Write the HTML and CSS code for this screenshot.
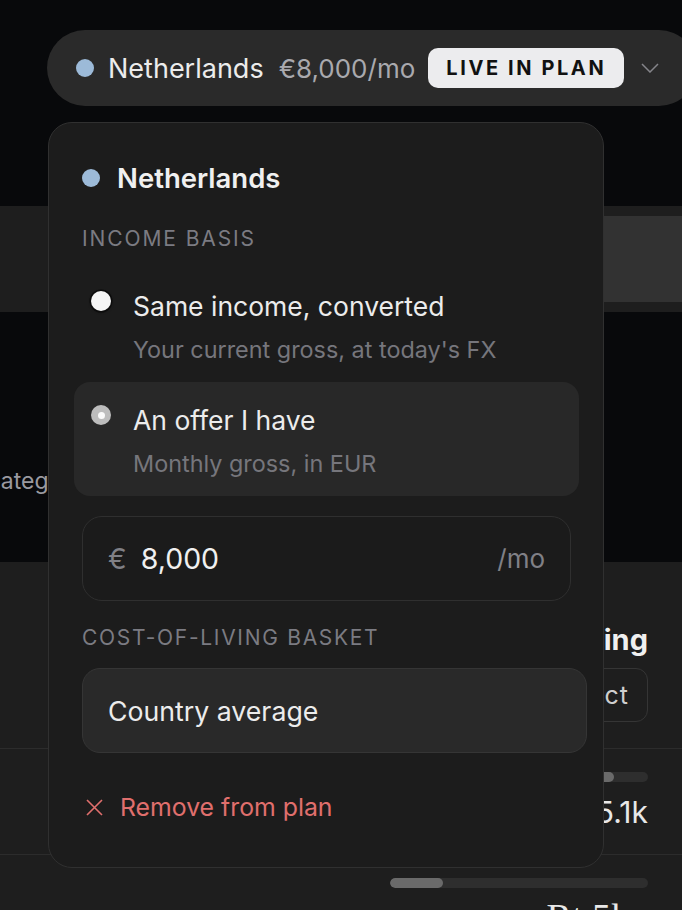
FILE: index.html
```html
<!DOCTYPE html>
<html lang="en">
<head>
<meta charset="utf-8">
<title>Plan</title>
<link rel="stylesheet" href="styles.css">
</head>
<body>
<div class="page">
  <div class="bg-top"></div>
  <div class="band"><div class="band-block"></div></div>
  <div class="dark"><span class="cat-label">Categories</span></div>
  <div class="lower">
    <div class="lower-head">
      <h2 class="lower-title">Spending</h2>
      <button class="ghost-btn" type="button">Select</button>
    </div>
    <div class="row">
      <div class="bar"><div class="bar-fill" style="width:87%"></div></div>
      <div class="row-value">€5.1k</div>
    </div>
    <div class="row">
      <div class="bar"><div class="bar-fill" style="width:20.5%"></div></div>
      <div class="row-serif">Rt 5k</div>
    </div>
  </div>
</div>

<div class="pill">
  <span class="dot"></span>
  <span class="pill-name">Netherlands</span>
  <span class="pill-price">€8,000/mo</span>
  <span class="badge">LIVE IN PLAN</span>
  <svg class="chev" viewBox="0 0 18 10" aria-hidden="true"><path d="M1 1 L9 9 L17 1" /></svg>
</div>

<div class="panel">
  <div class="panel-head">
    <span class="dot"></span>
    <span class="panel-title">Netherlands</span>
  </div>
  <div class="section-label">INCOME BASIS</div>
  <div class="options">
    <div class="option">
      <span class="radio"></span>
      <div class="option-text">
        <div class="option-title">Same income, converted</div>
        <div class="option-sub">Your current gross, at today's FX</div>
      </div>
    </div>
    <div class="option option-selected">
      <span class="radio radio-on"></span>
      <div class="option-text">
        <div class="option-title">An offer I have</div>
        <div class="option-sub">Monthly gross, in EUR</div>
      </div>
    </div>
  </div>
  <div class="amount-field">
    <span class="cur">€</span>
    <span class="amount">8,000</span>
    <span class="unit">/mo</span>
  </div>
  <div class="section-label section-label-2">COST-OF-LIVING BASKET</div>
  <div class="select-box">Country average</div>
  <div class="remove">
    <svg class="x-icon" viewBox="0 0 17 17" aria-hidden="true"><path d="M1 1 L16 16 M16 1 L1 16" /></svg>
    <span>Remove from plan</span>
  </div>
</div>
</body>
</html>
```

FILE: styles.css
```css
* { box-sizing: border-box; }

body {
  margin: 0;
  width: 682px;
  height: 910px;
  overflow: hidden;
  position: relative;
  background: #08090b;
  font-family: Inter, "Noto Sans", sans-serif;
  color: #ececec;
}

/* background page */
.page { display: flex; flex-direction: column; }
.bg-top { height: 206px; }
.band {
  height: 106px;
  background: #1e1e1e;
  display: flex;
  justify-content: flex-end;
  align-items: center;
}
.band-block { width: 352px; height: 86px; background: #323232; }
.dark { height: 250px; padding-top: 155px; }
.cat-label {
  display: block;
  margin-left: -16px;
  font-size: 23px;
  line-height: 28px;
  color: #9a9aa0;
}
.lower {
  background: #1e1e1e;
  height: 348px;
  display: flex;
  flex-direction: column;
}
.lower-head {
  display: flex;
  flex-direction: column;
  align-items: flex-end;
  padding: 62px 34px 26px 0;
}
.lower-title {
  margin: 0;
  font-size: 29px;
  font-weight: 700;
  line-height: 32px;
  color: #f0f0f0;
}
.ghost-btn {
  margin-top: 12px;
  height: 54px;
  padding: 0 18px;
  border: 1px solid #353535;
  border-radius: 12px;
  background: transparent;
  color: #cfcfcf;
  font-family: Inter, sans-serif;
  font-size: 25px;
  letter-spacing: 1px;
}
.row {
  border-top: 1px solid #2c2c2c;
  padding: 23px 34px 26px 0;
  display: flex;
  flex-direction: column;
  align-items: flex-end;
}
.bar {
  width: 258px;
  height: 10px;
  border-radius: 5px;
  background: #2e2e2e;
  overflow: hidden;
}
.bar-fill { height: 100%; background: #6a6a6a; border-radius: 5px; }
.row-value {
  margin-top: 14px;
  font-size: 30px;
  line-height: 32px;
  color: #e8e8e8;
}
.row-serif {
  margin-top: 10px;
  margin-right: 18px;
  font-family: "Liberation Serif", serif;
  font-size: 38px;
  line-height: 38px;
  color: #e8e8e8;
}

/* pill */
.pill {
  position: absolute;
  left: 47px;
  top: 30px;
  width: 650px;
  height: 76px;
  border-radius: 38px;
  background: #2a2a2a;
  display: flex;
  align-items: center;
  padding-left: 29px;
}
.dot {
  width: 18px;
  height: 18px;
  border-radius: 50%;
  background: #9cbad8;
  flex-shrink: 0;
}
.pill-name { margin-left: 14px; font-size: 27px; color: #ececec; }
.pill-price { margin-left: 15px; font-size: 26px; color: #a9a9ae; }
.badge {
  margin-left: 13px;
  height: 40px;
  padding: 0 18px;
  display: flex;
  align-items: center;
  border-radius: 10px;
  background: #ececee;
  color: #111;
  font-size: 20px;
  font-weight: 700;
  letter-spacing: 2.6px;
}
.chev {
  margin-left: 17px;
  width: 18px;
  height: 10px;
  fill: none;
  stroke: #85858a;
  stroke-width: 1.5;
}

/* panel */
.panel {
  position: absolute;
  left: 48px;
  top: 122px;
  width: 556px;
  height: 746px;
  background: #1c1c1c;
  border: 1px solid #303030;
  border-radius: 24px;
  padding: 39px 0 0 33px;
  overflow: hidden;
}
.panel-head { display: flex; align-items: center; height: 32px; }
.panel-title {
  margin-left: 17px;
  font-size: 27.5px;
  font-weight: 600;
  color: #f0f0f0;
}
.section-label {
  margin-top: 33px;
  font-size: 21px;
  line-height: 24px;
  letter-spacing: 1.9px;
  color: #7b7b82;
}
.section-label-2 { margin-top: 25px; letter-spacing: 1.7px; }
.options { margin-top: 17px; margin-left: -8px; width: 505px; }
.option {
  display: flex;
  align-items: flex-start;
  padding: 22px 17px 18px;
  border-radius: 16px;
}
.option-selected { background: #282828; }
.radio {
  width: 20px;
  height: 20px;
  margin-top: 1px;
  margin-right: 22px;
  border-radius: 50%;
  flex-shrink: 0;
  background: #f5f5f5;
  box-shadow: 0 0 0 1.5px #0c0c0c, 0 1px 3px rgba(0, 0, 0, 0.7);
  display: flex;
  align-items: center;
  justify-content: center;
}
.radio-on { background: #bdbdbd; box-shadow: none; }
.radio-on::after {
  content: "";
  width: 7px;
  height: 7px;
  border-radius: 50%;
  background: #fafafa;
}
.option-title { font-size: 26.5px; line-height: 32px; color: #ececec; }
.option-sub { margin-top: 14px; font-size: 23.4px; line-height: 28px; color: #76767c; }

.amount-field {
  margin-top: 20px;
  width: 489px;
  height: 85px;
  border: 1px solid #2f2f2f;
  border-radius: 20px;
  background: #1b1b1b;
  display: flex;
  align-items: center;
  padding: 0 25px;
}
.cur { font-size: 28px; color: #808086; }
.amount { margin-left: 14px; font-size: 28.5px; color: #f0f0f0; }
.unit { margin-left: auto; font-size: 26px; color: #808086; }

.select-box {
  margin-top: 18px;
  width: 505px;
  height: 85px;
  background: #292929;
  border: 1px solid #353535;
  border-radius: 18px;
  padding-left: 25px;
  display: flex;
  align-items: center;
  font-size: 26.7px;
  color: #ececec;
}
.remove {
  margin-top: 38px;
  height: 32px;
  display: flex;
  align-items: center;
  font-size: 24.8px;
  color: #e06f6d;
}
.x-icon {
  margin-left: 4px;
  margin-right: 17px;
  width: 17px;
  height: 17px;
  fill: none;
  stroke: #e06f6d;
  stroke-width: 1.6;
}
```
